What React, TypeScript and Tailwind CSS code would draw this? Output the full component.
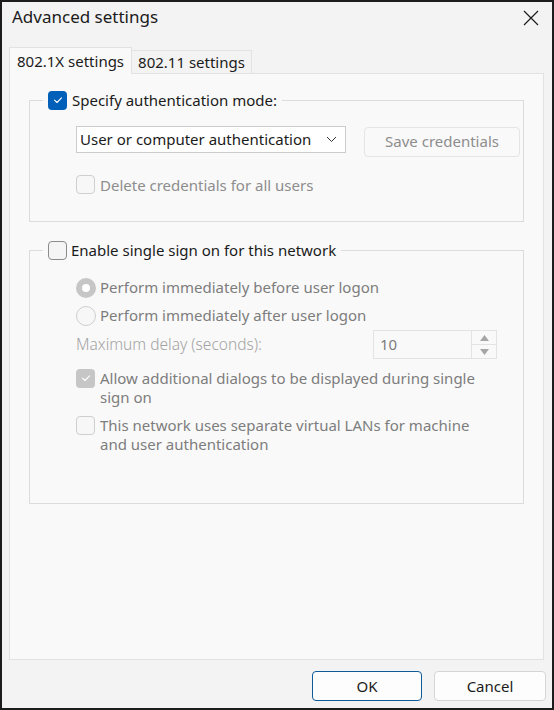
const Check = ({ color = "white" }: { color?: string }) => (
  <svg width="10" height="10" viewBox="0 0 10 10" fill="none">
    <path d="M1.5 5.2 L4 7.5 L8.5 2.8" stroke={color} strokeWidth="1.1" strokeLinecap="round" strokeLinejoin="round" />
  </svg>
);

const Box = ({ kind }: { kind: "blue" | "empty" | "disabled" | "disabledChecked" }) => {
  if (kind === "blue")
    return (
      <span className="w-[19px] h-[19px] shrink-0 rounded-[4px] bg-[#005fb8] flex items-center justify-center">
        <Check />
      </span>
    );
  if (kind === "disabledChecked")
    return (
      <span className="w-[19px] h-[19px] shrink-0 rounded-[4px] bg-[#c6c6c6] flex items-center justify-center">
        <Check />
      </span>
    );
  if (kind === "empty")
    return <span className="w-[19px] h-[19px] shrink-0 rounded-[4px] border border-[#8b8b8b] bg-[#f5f5f5]" />;
  return <span className="w-[19px] h-[19px] shrink-0 rounded-[4px] border border-[#cfcfcf] bg-[#f7f7f7]" />;
};

const Radio = ({ on }: { on?: boolean }) =>
  on ? (
    <span className="w-[20px] h-[20px] shrink-0 rounded-full bg-[#c6c6c6] flex items-center justify-center">
      <span className="w-[8px] h-[8px] rounded-full bg-white" />
    </span>
  ) : (
    <span className="w-[20px] h-[20px] shrink-0 rounded-full border border-[#cfcfcf] bg-[#f7f7f7]" />
  );

export default function App() {
  return (
    <div className="w-[554px] h-[710px] border-2 border-[#1c1c1c] bg-[#f3f3f3] flex flex-col font-['Noto_Sans',sans-serif] text-[15px] text-[#1b1b1b]">
      {/* title bar */}
      <div className="h-[30px] flex items-center justify-between pl-[10px] pr-[13px]">
        <span className="text-[17px]">Advanced settings</span>
        <svg width="16" height="16" viewBox="0 0 16 16" className="mt-[2px]">
          <path d="M1 1 L15 15 M15 1 L1 15" stroke="#1b1b1b" strokeWidth="1.2" />
        </svg>
      </div>

      {/* tabs */}
      <div className="mt-[15px] ml-[7px] flex items-end">
        <div className="h-[27px] px-[7px] flex items-center bg-[#f9f9f9] border border-b-0 border-[#e2e2e2] relative z-10 -mb-px">
          802.1X settings
        </div>
        <div className="h-[23px] px-[6px] pt-[1px] flex items-center bg-[#f3f3f3] border border-l-0 border-b-0 border-[#e2e2e2]">
          802.11 settings
        </div>
      </div>

      {/* panel */}
      <div className="ml-[7px] mr-[8px] flex-1 border border-[#e2e2e2] bg-[#f9f9f9] px-[19px] pt-[15px]">
        <fieldset className="border border-[#dcdcdc] h-[133px]">
          <legend className="ml-[13px] px-[5px] flex items-center gap-[5px]">
            <Box kind="blue" />
            <span>Specify authentication mode:</span>
          </legend>
          <div className="pl-[46px] pt-[14px] flex items-start gap-[18px]">
            <div className="w-[270px] h-[27px] bg-white border border-[#cccccc] flex items-center justify-between pl-[3px] pr-[8px]">
              <span>User or computer authentication</span>
              <svg width="11" height="7" viewBox="0 0 11 7" fill="none">
                <path d="M1 1 L5.5 5.5 L10 1" stroke="#333" strokeWidth="1" />
              </svg>
            </div>
            <div className="w-[156px] h-[30px] mt-[1px] rounded-[4px] border border-[#e5e5e5] bg-[#f9f9f9] flex items-center justify-center text-[#8d8d8d]">
              Save credentials
            </div>
          </div>
          <div className="pl-[46px] mt-[17px] flex items-center gap-[5px] text-[#8d8d8d]">
            <Box kind="disabled" />
            <span>Delete credentials for all users</span>
          </div>
        </fieldset>

        <fieldset className="border border-[#dcdcdc] mt-[17px] h-[265px]">
          <legend className="ml-[13px] px-[5px] flex items-center gap-[4px]">
            <Box kind="empty" />
            <span>Enable single sign on for this network</span>
          </legend>
          <div className="pl-[46px] pr-[26px] pt-[12px] flex flex-col text-[#7d7d7d]">
            <div className="h-[28px] flex items-center gap-[4px]">
              <Radio on />
              <span>Perform immediately before user logon</span>
            </div>
            <div className="h-[28px] flex items-center gap-[4px]">
              <Radio />
              <span>Perform immediately after user logon</span>
            </div>
            <div className="h-[30px] flex items-center justify-between">
              <span className="text-[15.5px] text-[#a3a3a3] font-light">Maximum delay (seconds):</span>
              <div className="w-[124px] h-[29px] border border-[#e3e3e3] bg-[#f9f9f9] flex">
                <span className="flex-1 flex items-center pl-[6px] text-[#7d7d7d]">10</span>
                <div className="w-[25px] border-l border-[#e3e3e3] flex flex-col">
                  <div className="flex-1 flex items-center justify-center border-b border-[#e3e3e3]">
                    <svg width="9" height="6" viewBox="0 0 9 6">
                      <path d="M0 6 L4.5 0 L9 6 Z" fill="#a6a6a6" />
                    </svg>
                  </div>
                  <div className="flex-1 flex items-center justify-center">
                    <svg width="9" height="6" viewBox="0 0 9 6">
                      <path d="M0 0 L4.5 6 L9 0 Z" fill="#a6a6a6" />
                    </svg>
                  </div>
                </div>
              </div>
            </div>
            <div className="mt-[9px] flex items-start gap-[5px] leading-[19px]">
              <Box kind="disabledChecked" />
              <span>
                Allow additional dialogs to be displayed during single
                <br />
                sign on
              </span>
            </div>
            <div className="mt-[9px] flex items-start gap-[5px] leading-[19px]">
              <Box kind="disabled" />
              <span>
                This network uses separate virtual LANs for machine
                <br />
                and user authentication
              </span>
            </div>
          </div>
        </fieldset>
      </div>

      {/* buttons */}
      <div className="flex justify-end gap-[12px] pr-[6px] pt-[11px] pb-[7px]">
        <button className="w-[110px] h-[30px] rounded-[4px] border border-[#0f5a98] bg-[#fdfdfd] text-[15px]">
          OK
        </button>
        <button className="w-[112px] h-[30px] rounded-[4px] border border-[#d5d5d5] bg-[#fdfdfd] text-[15px]">
          Cancel
        </button>
      </div>
    </div>
  );
}
